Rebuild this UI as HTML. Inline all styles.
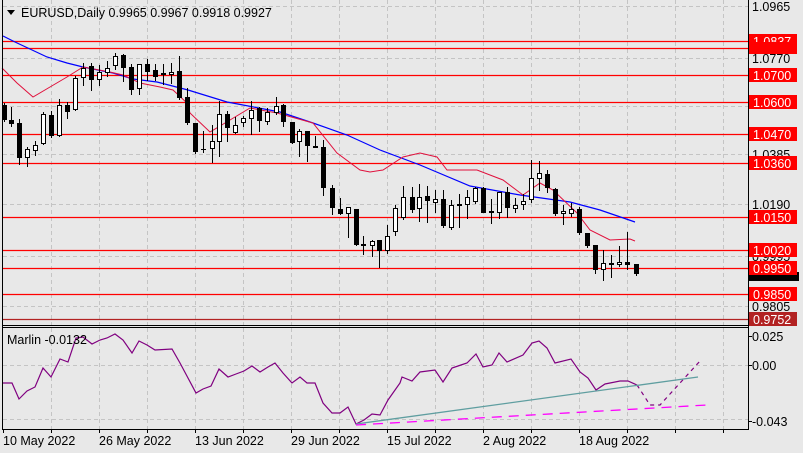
<!DOCTYPE html>
<html><head><meta charset="utf-8">
<style>
html,body{margin:0;padding:0;background:#e8e8e8;}
svg{display:block;font-family:"Liberation Sans",sans-serif;}
</style></head>
<body>
<svg id="s" width="803" height="453" viewBox="0 0 803 453" xmlns="http://www.w3.org/2000/svg">
<rect width="803" height="453" fill="#e8e8e8"/>
<g id="grid" stroke="#c4c4c4" stroke-dasharray="4,3" stroke-width="1"></g>
<g id="hl"></g>
<polyline fill="none" stroke="#0000ff" stroke-width="1.2" points="3,36 15,42 47,57 67,63 83,67 113,73 133,79 157,82 188,90 227,102 280,112 313,123 347,135 380,150 420,165 470,186 520,195 570,202 600,210 635,222"/>
<polyline fill="none" stroke="#e0103c" stroke-width="1" points="2,68 17,83 33,97 50,87 67,77 83,67 110,72 123,75 140,83 160,87 173,90 187,103 190,113 210,132 230,120 250,108 277,113 313,123 337,153 360,170 370,172 383,170 403,157 420,153 437,157 447,170 477,170 503,180 523,195 540,183 553,190 577,213 590,230 610,240 630,239 635,241"/>
<g id="c"></g>
<!-- frames -->
<line x1="2.5" y1="0" x2="2.5" y2="430" stroke="#000"/>
<line x1="748.5" y1="0" x2="748.5" y2="430" stroke="#000"/>
<line x1="2" y1="325.5" x2="749" y2="325.5" stroke="#000"/>
<line x1="2" y1="327.5" x2="749" y2="327.5" stroke="#000"/>
<line x1="2" y1="429.5" x2="749" y2="429.5" stroke="#000"/>
<!-- title -->
<polygon points="7,10 15,10 11,15" fill="#000"/>
<text x="21" y="17" font-size="12.5" fill="#000">EURUSD,Daily  0.9965 0.9967 0.9918 0.9927</text>
<!-- axis -->
<g font-size="12.5" fill="#000">
<text x="752" y="11">1.0965</text>
<text x="752" y="63">1.0770</text>
<text x="752" y="159">1.0385</text>
<text x="752" y="209">1.0190</text>
<text x="752" y="261">0.9995</text>
<text x="752" y="311">0.9805</text>
</g>
<g id="lab" font-size="12.5" fill="#fff"></g>
<!-- indicator -->
<g stroke="#c4c4c4" stroke-dasharray="4,3"><line x1="3" y1="365.5" x2="748" y2="365.5"/><line x1="3" y1="419.5" x2="748" y2="419.5"/></g>
<polyline fill="none" stroke="#800080" stroke-width="1.2" points="3,383 12,383 19,399 27,391 35,387 43,368 51,377 60,359 68,362 76,338 83,337 92,344 100,340 107,338 115,334 123,340 132,353 139,341 147,345 155,350 172,349 180,363 188,378 196,393 203,389 211,386 219,369 228,377 236,374 244,371 252,366 260,372 268,367 275,363 283,373 292,383 300,377 307,383 315,383 323,403 332,413 340,413 348,407 356,424 364,420 372,414 380,415 388,400 400,383 402,377 412,381 420,372 435,370 443,382 452,368 458,366 467,363 476,354 483,367 492,365 499,353 507,362 523,355 532,343 539,341 547,348 555,363 571,359 580,372 588,378 596,390 605,384 620,381 628,381 637,385"/>
<polyline fill="none" stroke="#800080" stroke-width="1.2" stroke-dasharray="4,4" points="637,385 650,405 660,405 700,361"/>
<line x1="356" y1="424" x2="698" y2="377" stroke="#5f9ea0" stroke-width="1.3"/>
<line x1="356" y1="425" x2="707" y2="405" stroke="#ff00ff" stroke-width="1.3" stroke-dasharray="10,7"/>
<text x="7" y="344" font-size="12.5" fill="#000">Marlin -0.0132</text>
<g font-size="12.5" fill="#000">
<text x="752" y="341">0.025</text>
<text x="752" y="370">0.00</text>
<text x="752" y="426">-0.043</text>
</g>
<g stroke="#000"><line x1="748" y1="336.5" x2="752" y2="336.5"/><line x1="748" y1="365.5" x2="752" y2="365.5"/><line x1="748" y1="421.5" x2="752" y2="421.5"/></g>
<g font-size="12.5" fill="#000">
<text x="3" y="445">10 May 2022</text>
<text x="99" y="445">26 May 2022</text>
<text x="195" y="445">13 Jun 2022</text>
<text x="291" y="445">29 Jun 2022</text>
<text x="387" y="445">15 Jul 2022</text>
<text x="483" y="445">2 Aug 2022</text>
<text x="579" y="445">18 Aug 2022</text>
</g>
<g id="ticks" stroke="#000"></g>
</svg>
<script>
var NS="http://www.w3.org/2000/svg";
function el(p,t,a){var e=document.createElementNS(NS,t);for(var k in a)e.setAttribute(k,a[k]);document.getElementById(p).appendChild(e);return e;}
for(var x=51;x<=723;x+=48){el("grid","line",{x1:x+.5,y1:0,x2:x+.5,y2:325});el("grid","line",{x1:x+.5,y1:328,x2:x+.5,y2:429});}
[6,58,106,154,204,256,306].forEach(function(y){el("grid","line",{x1:3,y1:y+.5,x2:748,y2:y+.5});});
for(var x=3;x<=723;x+=48){el("ticks","line",{x1:x+.5,y1:429,x2:x+.5,y2:433});}
var L=[[41,"1.0837","#ff0000"],[48,"1.0807","#ff0000"],[75,"1.0700","#ff0000"],[102,"1.0600","#ff0000"],[134,"1.0470","#ff0000"],[163,"1.0360","#ff0000"],[217,"1.0150","#ff0000"],[250,"1.0020","#ff0000"],[268,"0.9950","#ff0000"],[294,"0.9850","#ff0000"],[319,"0.9752","#b22222"]];
el("lab","rect",{x:749,y:272,width:50,height:9,fill:"#000"});
L.forEach(function(l){el("hl","line",{x1:3,y1:l[0]+.5,x2:748,y2:l[0]+.5,stroke:l[2],"stroke-width":1.3});
 if(l[1]=="1.0807"){el("lab","rect",{x:749,y:l[0]-6,width:48,height:12,fill:"#ff0000"});}
 else{el("lab","rect",{x:749,y:l[0]-7,width:48,height:14,fill:l[2]});var t=el("lab","text",{x:753,y:l[0]+5});t.textContent=l[1];}
});
var C=[[4,103,122,105,120,1],[11,107,127,120,124,1],[19,119,165,123,158,1],[27,147,167,149,158,0],[35,141,156,145,151,0],[43,112,145,114,144,0],[51,111,138,115,136,1],[59,99,137,105,136,0],[67,102,119,105,112,1],[75,76,111,78,110,0],[83,63,86,68,78,0],[91,63,91,66,80,1],[99,65,86,72,80,0],[107,61,77,68,73,0],[115,53,70,56,66,0],[123,54,82,55,68,1],[131,64,95,67,90,1],[139,64,95,64,89,0],[147,59,81,64,72,1],[155,64,81,70,77,1],[163,64,85,73,75,0],[171,63,84,72,75,0],[179,56,100,71,98,1],[187,88,125,97,123,1],
[195,123,154,123,152,1],[203,131,153,149,150,1],[212,125,163,141,149,0],[219,101,157,114,142,0],[227,111,142,114,128,1],[235,117,134,125,133,0],[243,116,127,118,123,0],[251,101,135,110,119,0],[259,107,132,108,121,1],[267,108,125,112,122,0],[276,97,115,106,113,0],[283,104,127,105,122,1],[292,122,144,122,143,1],[299,129,157,131,142,0],[307,131,162,131,146,1],[315,136,148,146,148,1],[323,140,196,147,188,1],[332,185,215,188,208,1],[340,198,215,209,214,1],[348,207,238,207,214,0],[356,209,246,209,245,1],[363,236,255,244,246,1],[372,240,257,241,246,0],[379,240,268,240,251,1],[387,225,254,236,251,0],[395,205,236,208,232,0],[403,186,220,197,218,0],[412,187,213,197,210,1],[419,184,222,197,209,0],[427,186,223,196,201,1],[435,190,213,199,203,0],[443,190,228,199,226,1],[451,200,230,205,228,0],[459,194,228,204,206,1],[467,190,219,197,205,0],[475,187,204,188,202,0],[483,187,213,188,213,1],[491,199,224,211,213,1],[499,192,219,192,213,0],[507,187,218,192,208,1],[515,198,213,205,209,0],[523,194,210,201,205,0],[531,160,203,178,200,0],[539,161,191,173,179,0],[547,170,193,174,188,1],[555,188,216,189,214,1],[563,205,225,211,214,0],[571,203,217,209,214,0],[579,207,235,209,233,1],[587,233,248,233,246,1],[595,245,274,245,270,1],[603,250,281,263,270,0],[611,255,278,263,265,1],[619,246,267,262,265,0],[627,232,270,262,265,1],[636,264,276,264,274,1]];
C.forEach(function(c){var x=c[0]+.5;el("c","line",{x1:x,y1:c[1],x2:x,y2:c[2],stroke:"#000"});
 var h=Math.max(c[4]-c[3],1);
 if(c[5])el("c","rect",{x:c[0]-2,y:c[3],width:5,height:h,fill:"#000"});
 else el("c","rect",{x:c[0]-1.5,y:c[3]+.5,width:4,height:Math.max(h-1,1),fill:"#fff",stroke:"#000"});});
</script>
</body></html>
